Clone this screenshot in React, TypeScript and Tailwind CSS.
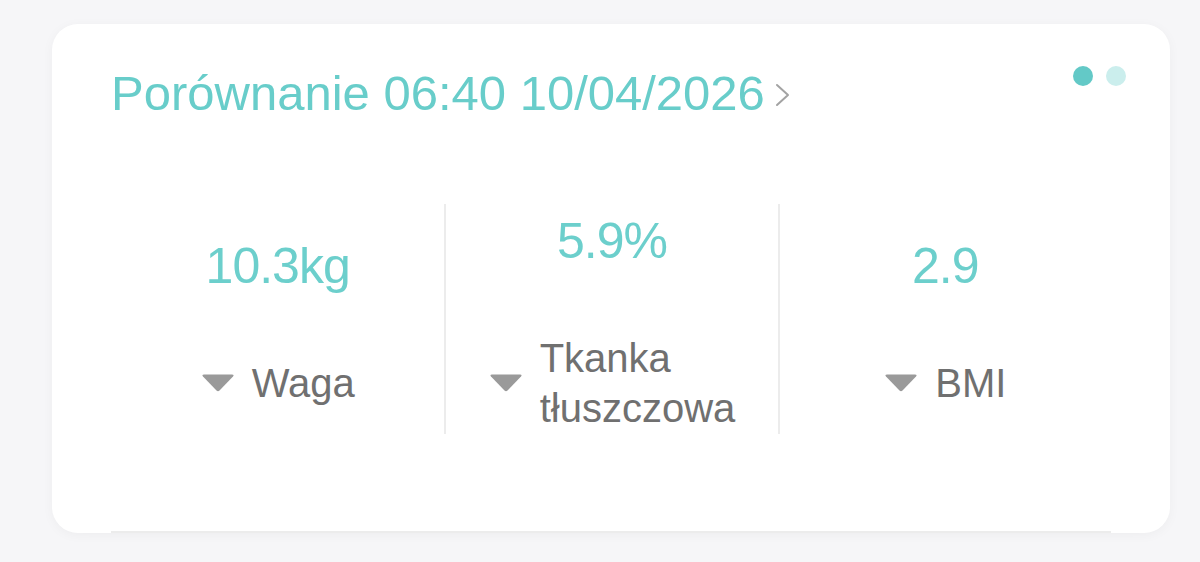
const stats = [
  { value: "10.3kg", label: ["Waga"] },
  { value: "5.9%", label: ["Tkanka", "tłuszczowa"] },
  { value: "2.9", label: ["BMI"] },
];

function DownTriangle() {
  return (
    <svg width="34" height="19" viewBox="0 0 34 19" className="shrink-0">
      <path d="M3 1.5 H31 Q33.5 1.5 32 3.5 L18.5 17.5 Q17 19 15.5 17.5 L2 3.5 Q0.5 1.5 3 1.5 Z" fill="#9a9a9a" />
    </svg>
  );
}

export default function App() {
  return (
    <div
      className="min-h-[562px] w-[1200px] bg-[#f6f6f8] pt-[24px] pl-[52px]"
      style={{ fontFamily: '"Liberation Sans", Arial, sans-serif' }}
    >
      <div className="flex h-[509px] w-[1118px] flex-col rounded-[26px] bg-white px-[59px] pt-[45px] shadow-[0_2px_12px_rgba(0,0,0,0.04)]">
        {/* Header */}
        <div className="flex items-start justify-between">
          <div className="flex items-center gap-[10px]">
            <span className="text-[49px] leading-none text-[#68cdca]">
              Porównanie 06:40 10/04/2026
            </span>
            <svg width="15" height="24" viewBox="0 0 15 24" className="mt-[2px]">
              <path d="M2 2 L13 12 L2 22" fill="none" stroke="#a3a3a3" strokeWidth="2" strokeLinecap="round" strokeLinejoin="round" />
            </svg>
          </div>
          <div className="-mr-[15px] -mt-[3px] flex items-center gap-[13px]">
            <span className="h-[20px] w-[20px] rounded-full bg-[#63c9c7]" />
            <span className="h-[20px] w-[20px] rounded-full bg-[#cbeeed]" />
          </div>
        </div>

        {/* Stats */}
        <div className="mt-[86px] grid grid-cols-3">
          {stats.map((s, i) => (
            <div
              key={s.value}
              className={`flex h-[230px] flex-col items-center justify-center pt-[10px] ${
                i > 0 ? "border-l-2 border-[#ececec]" : ""
              }`}
            >
              <div className="text-[50px] leading-none tracking-[-1px] text-[#6ccfcc]">
                {s.value}
              </div>
              <div className="mt-[67px] flex items-center gap-[17px]">
                <DownTriangle />
                <div className="text-[40px] leading-[50px] text-[#707070]">
                  {s.label.map((l) => (
                    <div key={l}>{l}</div>
                  ))}
                </div>
              </div>
            </div>
          ))}
        </div>

        <div className="mt-auto h-[2px] bg-[#ececec]" />
      </div>
    </div>
  );
}
